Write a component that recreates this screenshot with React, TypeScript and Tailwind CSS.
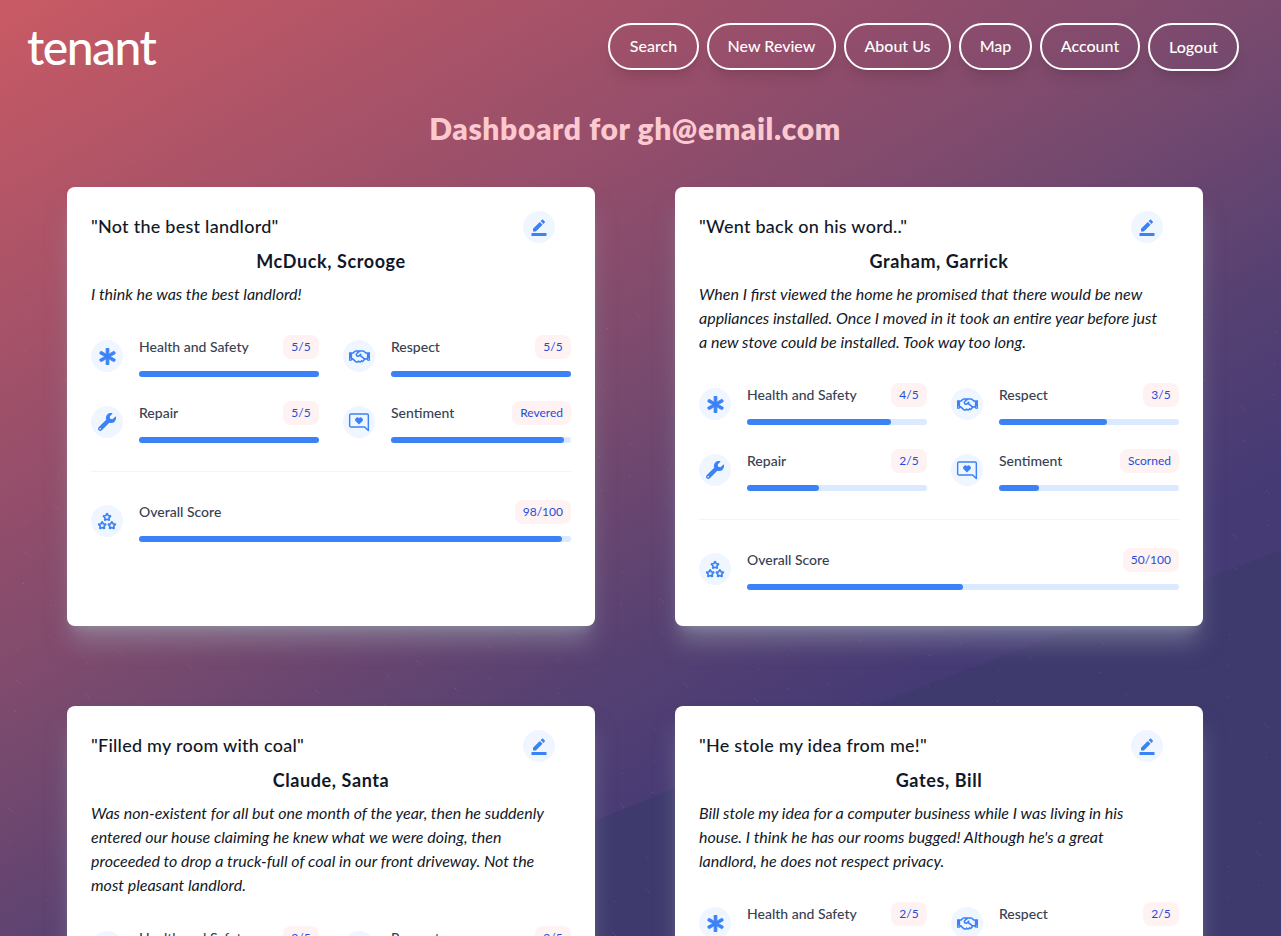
import { FaAsterisk, FaRegHandshake, FaWrench } from 'react-icons/fa';
import { MdBorderColor } from 'react-icons/md';
import { TbStars } from 'react-icons/tb';

const font = { fontFamily: '"Lato", "Noto Sans", sans-serif' };

const navItems = [
  { label: 'Search', box: 'w-[91px] h-[47px]' },
  { label: 'New Review', box: 'w-[129px] h-[47px]' },
  { label: 'About Us', box: 'w-[107px] h-[47px]' },
  { label: 'Map', box: 'w-[73px] h-[47px]' },
  { label: 'Account', box: 'w-[100px] h-[47px]' },
  { label: 'Logout', box: 'w-[91px] h-[48px]' },
];

type Review = {
  title: string;
  name: string;
  body: string;
  health: number;
  respect: number;
  repair: number;
  sentiment: string;
  sentimentPct: number;
  overall: number;
};

const reviews: Review[] = [
  {
    title: '"Not the best landlord"',
    name: 'McDuck, Scrooge',
    body: 'I think he was the best landlord!',
    health: 5,
    respect: 5,
    repair: 5,
    sentiment: 'Revered',
    sentimentPct: 96,
    overall: 98,
  },
  {
    title: '"Went back on his word.."',
    name: 'Graham, Garrick',
    body: 'When I first viewed the home he promised that there would be new\nappliances installed. Once I moved in it took an entire year before just\na new stove could be installed. Took way too long.',
    health: 4,
    respect: 3,
    repair: 2,
    sentiment: 'Scorned',
    sentimentPct: 22,
    overall: 50,
  },
  {
    title: '"Filled my room with coal"',
    name: 'Claude, Santa',
    body: 'Was non-existent for all but one month of the year, then he suddenly\nentered our house claiming he knew what we were doing, then\nproceeded to drop a truck-full of coal in our front driveway. Not the\nmost pleasant landlord.',
    health: 2,
    respect: 2,
    repair: 2,
    sentiment: 'Scorned',
    sentimentPct: 22,
    overall: 40,
  },
  {
    title: '"He stole my idea from me!"',
    name: 'Gates, Bill',
    body: "Bill stole my idea for a computer business while I was living in his\nhouse. I think he has our rooms bugged! Although he's a great\nlandlord, he does not respect privacy.",
    health: 2,
    respect: 2,
    repair: 2,
    sentiment: 'Scorned',
    sentimentPct: 22,
    overall: 40,
  },
];

// speckle on the background, seeded so it stays the same every load
const specks = Array.from({ length: 700 }, (_, i) => ({
  x: (i * 467.3 + (i % 13) * 91) % 1281,
  y: (i * 283.7 + (i % 7) * 143) % 936,
}));

function Backdrop() {
  return (
    <svg className="absolute inset-0" width="1281" height="936" viewBox="0 0 1281 936">
      <polygon points="0,1050 622,810 895,697 1281,550 1281,936 400,936" fill="#3f3a6e" />
      {specks.map((s, i) => (
        <rect key={i} x={s.x} y={s.y} width="1" height="1" fill="#ffffff" opacity={s.y > 300 ? 0.14 : 0.06} />
      ))}
    </svg>
  );
}

function HeartBubble() {
  return (
    <svg width="22" height="22" viewBox="0 0 20 20" fill="none">
      <path d="M2.500 2.800h15a1 1 0 0 1 1 1v14l-3.300-3.300h-12.700a1 1 0 0 1-1-1v-9.700a1 1 0 0 1 1-1z" stroke="#3b82f6" strokeWidth="1.300" strokeLinejoin="round" />
      <path d="M10 12.200l-3.200-3.200a1.900 1.900 0 0 1 3.200-2.300a1.900 1.900 0 0 1 3.200 2.300z" fill="#3b82f6" />
    </svg>
  );
}

function Meter({ icon, label, badge, pct }: { icon: React.ReactNode; label: string; badge: string; pct: number }) {
  return (
    <div className="flex items-center gap-4">
      <div className="flex h-8 w-8 shrink-0 items-center justify-center rounded-full bg-[#eff6ff] text-[#3b82f6]">{icon}</div>
      <div className="min-w-0 flex-1">
        <div className="flex h-6 items-center justify-between">
          <span className="pb-0.5 text-[14px] font-medium text-[#374151]">{label}</span>
          <span className="flex h-6 min-w-9 items-center justify-center rounded-lg bg-[#fef2f2] px-2 pb-px text-xs text-[#1d4ed8]">{badge}</span>
        </div>
        <div className="mt-3 h-1.5 w-full rounded-full bg-[#dbeafe]">
          <div className="h-full rounded-full bg-[#3b82f6]" style={{ width: `${pct}%` }} />
        </div>
      </div>
    </div>
  );
}

function ReviewCard({ review }: { review: Review }) {
  return (
    <div className="rounded-lg bg-white px-6 pt-6 pb-9 shadow-xl shadow-gray-400/50">
      <div className="flex h-8 items-center justify-between pr-4">
        <h2 className="pb-0.5 text-lg font-medium tracking-[0.25px] text-[#111827]">{review.title}</h2>
        <button className="flex h-8 w-8 items-center justify-center rounded-full bg-[#eff6ff] text-[#3b82f6]">
          <MdBorderColor size={18} />
        </button>
      </div>
      <h3 className="mt-1 text-center text-lg font-bold tracking-[0.6px] text-[#111827]">{review.name}</h3>
      <p className="mt-[7px] text-base whitespace-pre-line italic text-[#111827]">{review.body}</p>
      <div className="mt-[29px] grid grid-cols-2 gap-x-6 gap-y-6">
        <Meter icon={<FaAsterisk size={17} stroke="currentColor" strokeWidth={24} />} label="Health and Safety" badge={`${review.health}/5`} pct={review.health * 20} />
        <Meter icon={<FaRegHandshake size={21} />} label="Respect" badge={`${review.respect}/5`} pct={review.respect * 20} />
        <Meter icon={<FaWrench size={18} />} label="Repair" badge={`${review.repair}/5`} pct={review.repair * 20} />
        <Meter icon={<HeartBubble />} label="Sentiment" badge={review.sentiment} pct={review.sentimentPct} />
      </div>
      <div className="my-7 border-t border-[#f3f4f6]" />
      <Meter icon={<TbStars size={20} />} label="Overall Score" badge={`${review.overall}/100`} pct={review.overall} />
    </div>
  );
}

export default function App() {
  return (
    <div
      style={font}
      className="relative h-[936px] overflow-hidden bg-[linear-gradient(150deg,#c95a64_0%,#914d6b_32%,#7a4a6e_44%,#574172_60%,#463a75_72%,#463a75_100%)]"
    >
      <Backdrop />
      <div className="relative">
        <header className="flex h-[110px] items-start justify-between pl-[27px] pr-[42px] pt-[23px]">
          <div className="text-5xl leading-[48px] font-medium tracking-[-1.5px] text-white">tenant</div>
          <nav className="flex items-start gap-2">
            {navItems.map((item) => (
              <a
                key={item.label}
                className={`flex items-center justify-center rounded-full border-2 border-white pb-px text-base font-medium text-white shadow-lg ${item.box}`}
              >
                {item.label}
              </a>
            ))}
          </nav>
        </header>
        <h1 className="pr-[11px] text-center text-3xl leading-[36px] font-extrabold tracking-[0.6px] text-[#fbc9cf]">Dashboard for gh@email.com</h1>
        <div className="mt-[41px] ml-[67px] grid w-[1136px] grid-cols-2 gap-x-20 gap-y-20">
          {reviews.map((r) => (
            <ReviewCard key={r.name} review={r} />
          ))}
        </div>
      </div>
    </div>
  );
}
